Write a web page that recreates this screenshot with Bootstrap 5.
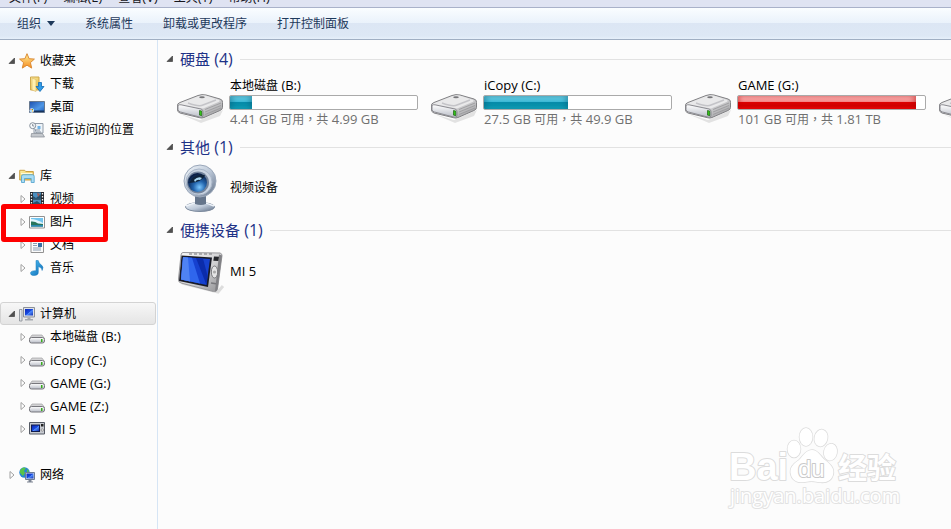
<!DOCTYPE html>
<html lang="zh-CN">
<head>
<meta charset="utf-8">
<meta name="viewport" content="width=device-width, initial-scale=1">
<title>计算机</title>
<link rel="stylesheet" href="https://cdn.jsdelivr.net/npm/bootstrap@5.3.0/dist/css/bootstrap.min.css">
<style>
body{font-family:"Open Sans","Noto Sans CJK SC",sans-serif;font-size:12px;line-height:16px;color:#000;background:#fcfcfc}
a,a:hover{color:inherit;text-decoration:none}
.latin{font-size:13px}
.menu-strip{height:7px;padding-left:9px;gap:16px;background:#dfe3f2;color:#16161c}
.menu-strip a{line-height:18px;white-space:nowrap}
.cmd-bar{height:33px;padding:0 0 0 17px;gap:30px;color:#1e395b;border-top:1px solid #a9b1c9;border-bottom:1px solid #a0afc3;background:linear-gradient(#fafdff 0,#eaf2fb 48%,#dce6f4 50%,#dde8f5 90%,#e6f0fa 100%)}
.cmd-bar button{border:0;padding:0;background:none;color:inherit}
.cmd-bar .dropdown-toggle::after{margin-left:6px;vertical-align:2px;border-top:5px solid;border-left:4px solid transparent;border-right:4px solid transparent}
.tree{width:158px;padding-top:9px;border-right:1px solid #d6e5f5}
.tree ul{margin-bottom:23px}
.tree-row{height:23px;white-space:nowrap;border:1px solid transparent;border-radius:3px}
.root-row{padding-left:7px}
.leaf-row{padding-left:18px}
.root-row .glyph{margin:0 5px 0 3px}
.leaf-row .glyph{margin:0 5px 0 2px}
.chosen{margin-right:1px;border-color:#d3d3d3;background:linear-gradient(#f7f7f7,#e5e5e5)}
.glyph{width:16px;height:16px;flex:none}
.twist{width:8px;height:8px;flex:none}
.highlight{position:absolute;left:1px;top:-6px;width:107px;height:38px;border:5px solid #fe0000;border-radius:3px;z-index:2;pointer-events:none}
.files{padding:7px 0 0 8px;min-width:0}
.group-title{height:24px;margin:0;gap:6px;font-size:15px;line-height:22px;font-weight:400;color:#1e3287;white-space:nowrap}
.group-title::after{content:"";flex:1;border-top:1px solid #e2e2e2;margin-left:1px}
.latin-lg{font-size:16px}
.drives{height:64px;padding:0 0 2px 10px}
.drive{width:254px;flex:none;gap:5px}
.big-icon{width:48px;height:48px;flex:none}
.drive-text{width:189px}
.drive-name,.free{display:block;height:16px;line-height:16px;padding-left:1px}
.capacity{height:15px;margin:2px 0 1px;border:1px solid #aaa;border-radius:2px;background:#fff}
.capacity .progress-bar{background:linear-gradient(#7adcf0 0,#3cb9d6 45%,#078ba9 50%,#0995b0 75%,#16b4ca 100%);box-shadow:inset 3px 0 5px #0a5f7a66,inset -3px 0 5px #0a5f7a66}
.capacity .full{background:linear-gradient(#ffc7c7 0,#f58b8b 42%,#dc0000 50%,#d00000 75%,#fa0808 100%);box-shadow:inset 2px 0 4px #c0000066,inset -3px 0 5px #b0000066}
.free{color:#707070}
.device{height:59px;padding:0 0 2px 11px;gap:5px}
.brand-mark{position:absolute;right:46px;bottom:14px;width:180px;height:92px;pointer-events:none}
</style>
<script src="https://cdn.jsdelivr.net/npm/bootstrap@5.3.0/dist/js/bootstrap.bundle.min.js"></script>
</head>
<body class="min-vh-100 d-flex flex-column position-relative overflow-hidden">
<svg width="0" height="0" class="position-absolute" aria-hidden="true">
<defs>
<linearGradient id="gold" x2="1" y2="1"><stop stop-color="#fff3a8"/><stop offset="1" stop-color="#e5b43c"/></linearGradient>
<linearGradient id="star" x2="0" y2="1"><stop stop-color="#fff29a"/><stop offset="1" stop-color="#f58a1f"/></linearGradient>
<linearGradient id="screen" x2="1" y2="1"><stop stop-color="#0a28b8"/><stop offset=".5" stop-color="#1a4be0"/><stop offset=".55" stop-color="#4f8cff"/><stop offset="1" stop-color="#1230b0"/></linearGradient>
<linearGradient id="desk" x2="1" y2="1"><stop stop-color="#1c4fae"/><stop offset=".6" stop-color="#4f97e6"/><stop offset="1" stop-color="#1b59b9"/></linearGradient>
<linearGradient id="metal" x2="1" y2="1"><stop stop-color="#fafafa"/><stop offset=".55" stop-color="#d0d0d2"/><stop offset="1" stop-color="#8f8f92"/></linearGradient>
<linearGradient id="steel" x2="1" y2="1"><stop stop-color="#f4f8fc"/><stop offset=".5" stop-color="#bcc8d8"/><stop offset="1" stop-color="#5d6d84"/></linearGradient>
<linearGradient id="front" x2="0" y2="1"><stop stop-color="#fff"/><stop offset="1" stop-color="#b8bcc6"/></linearGradient>
<radialGradient id="lens" cx=".6" cy=".75" r=".7"><stop stop-color="#7cc8ff"/><stop offset=".45" stop-color="#2365ad"/><stop offset="1" stop-color="#0b1f46"/></radialGradient>
<linearGradient id="note" x2="1" y2="1"><stop stop-color="#55c2f5"/><stop offset="1" stop-color="#0869b5"/></linearGradient>
</defs>
<symbol id="open" viewBox="0 0 8 8"><path d="M6.500 1v5.500H1z" fill="#505050" stroke="#303030" stroke-width=".6"/></symbol>
<symbol id="shut" viewBox="0 0 8 8"><path d="M2 .5v7l4-3.500z" fill="#fff" stroke="#a0a0a0"/></symbol>
<symbol id="i-star" viewBox="0 0 16 16"><path d="M8 .7l2.100 5 5.300.4-4 3.500 1.300 5.500L8 12.200l-4.700 2.900 1.300-5.500-4-3.500 5.300-.4z" fill="url(#star)" stroke="#dc8b35"/></symbol>
<symbol id="i-down" viewBox="0 0 16 16"><path d="M1.500 1h8.500v13H1.500z" fill="url(#gold)" stroke="#cfa84d"/><path d="M3 2l4 1.500v12L3 14z" fill="#fff0ae" stroke="#d6b566" stroke-width=".6"/><path d="M9.500 6.500h3v4h2.500L11 15.500 7 10.500h2.500z" fill="#2f9be9" stroke="#1269b2" stroke-width=".8"/></symbol>
<symbol id="i-desk" viewBox="0 0 16 16"><path d="M.5 2.500h15v11H.5z" fill="url(#desk)" stroke="#66788f"/><path d="M1 11.500h14V13H1z" fill="#17345d"/><circle cx="2.800" cy="11.500" r="2.200" fill="#e6f1ff"/><path d="M1.500 10h1v1h-1z" fill="#f35325"/><path d="M3 10h1v1H3z" fill="#6ab11a"/><path d="M1.500 11.500h1v1h-1z" fill="#0694f0"/><path d="M3 11.500h1v1H3z" fill="#ffba08"/></symbol>
<symbol id="i-recent" viewBox="0 0 16 16"><path d="M5 1.500h9v9.500H5z" fill="#eef3f8" stroke="#929ca8"/><path d="M2.500 11.500h11l2 3.500h-13.500z" fill="#c3c7cc" stroke="#858b93" stroke-width=".7"/><path d="M6 7l1.500 4M7 8h4M8 10h4" stroke="#8b95a2" fill="none"/><path d="M8.500 4h3v3h-3z" fill="#70b2e4"/><circle cx="3.700" cy="3.700" r="3" fill="#f7fafc" stroke="#87909b"/><path d="M3.700 2v2h1.500" stroke="#6b7480" fill="none" stroke-width=".8"/></symbol>
<symbol id="i-lib" viewBox="0 0 16 16"><path d="M.7 12V2.300h5l1 1.200h7.600V12z" fill="url(#gold)" stroke="#cba044"/><path d="M2 5.500h11.500" stroke="#fff9d8"/><path d="M2.500 14.500V8.300q0-1.600 1.600-1.600h9.500q1.600 0 1.600 1.600v6.200h-3v-4H5.500v4z" fill="#a9ddf5" stroke="#4d9fcb" stroke-width=".8"/></symbol>
<symbol id="i-film" viewBox="0 0 16 16"><path d="M1 1h14v14H1z" fill="#25292f"/><path d="M4 1.500h8v6H4zM4 8.500h8v6H4z" fill="#4a8fc0"/><path d="M4 5l3 2 5-4v4.500H4zM4 12l4-2 4 3v1.500H4z" fill="#27506b"/><path d="M8 2l3 1-2 3z" fill="#a9574b"/><path d="M2.500 2v13M13.500 2v13" stroke="#f3f3f3" stroke-width="1.300" stroke-dasharray="1.500 1.500"/></symbol>
<symbol id="i-pic" viewBox="0 0 16 16"><path d="M.5 2.500h15v11.500H.5z" fill="#fff" stroke="#929292"/><path d="M2 4h12v8.500H2z" fill="#72c4ef"/><path d="M2 5q5 0 12 4v1H2z" fill="#e3f5fb"/><path d="M2 7.500q4-.5 7 2l5 .5v2.500H2z" fill="#28765c"/><path d="M2 11h12v1.500H2z" fill="#2a87b2"/></symbol>
<symbol id="i-doc" viewBox="0 0 16 16"><path d="M2 .5h9l3.500 3.500v11.500H2z" fill="#fafafa" stroke="#929292"/><path d="M4 4h5M4 6.500h4M4 8.500h4M4 11h8M4 13h8" stroke="#8c9db2"/><path d="M9 6h4v4H9z" fill="#376fa4"/></symbol>
<symbol id="i-note" viewBox="0 0 16 16"><path d="M7 .5h2.200q.5 3 3.500 4.800 2.300 1.700.4 5.200.1-3-3.800-4v5.700q0 3.300-4.300 3.300-3.500 0-3.500-2.300 0-2.700 5.500-2.500z" fill="url(#note)" stroke="#1678ba" stroke-width=".5"/></symbol>
<symbol id="i-pc" viewBox="0 0 16 16"><path d="M.5 3.500h2.500V15H.5z" fill="#e2e5e8" stroke="#858b93" stroke-width=".8"/><path d="M4.500 1.500h11v9.500h-11z" fill="#dfe2e7" stroke="#8b9098"/><path d="M6 3h8v6.500H6z" fill="url(#screen)"/><path d="M8.500 11.500h3V13H14v1.500H6V13h2.500z" fill="#a4a8ae"/></symbol>
<symbol id="i-hdd" viewBox="0 0 16 16"><path d="M3 6h10l2.500 3.500H.5z" fill="#d3d3d5" stroke="#a1a1a3" stroke-width=".7"/><rect x=".5" y="8.500" width="15" height="5.500" rx="2" fill="url(#front)" stroke="#77777c"/><path d="M12 10h1.500v3H12z" fill="#37ae1b"/></symbol>
<symbol id="i-mi" viewBox="0 0 16 16"><path d="M.5 1.500h15v11.500H.5z" fill="#c8cbd1" stroke="#555a64"/><path d="M2 3.500h9v7.500H2z" fill="#101b4c"/><path d="M3 4.500h7V10H3z" fill="url(#screen)"/><path d="M12 3h2.500v2.500H12z" fill="#222"/><circle cx="13.300" cy="9" r="1.200" fill="#f4f4f4" stroke="#666" stroke-width=".6"/></symbol>
<symbol id="i-net" viewBox="0 0 16 16"><circle cx="5.500" cy="5.500" r="5.200" fill="#2584d5"/><path d="M1 3l3-2.500L7 1 5 4l1 2-2 3-3-3zM8 2l2 2-2 2z" fill="#57c44a"/><path d="M6.500 5.500h9v7h-9z" fill="#d8dde6" stroke="#6e7c95"/><path d="M7.500 6.500h7v5h-7z" fill="url(#screen)"/><path d="M9.500 13h3v1.500H14v1H8v-1h1.500z" fill="#7c8492"/></symbol>
<symbol id="b-hdd" viewBox="0 0 48 48"><path d="M4 36l20 6 23-10-3 6-19 7z" fill="#000" opacity=".1"/><path d="M1.500 28Q1 25.500 4 24.500L22 17.500Q26 16 30 17L44 21Q47 22 46.500 24.500V29.500Q46.500 31.500 44 32.500L28 39.500Q26 40.500 23.500 39.700L4 35Q1.500 34 1.500 32z" fill="url(#metal)" stroke="#808083"/><path d="M4 26L24 18q3-1 6-.2L43 22q1.500.8 0 1.800L27 30.500z" fill="#e9e9ea"/><path d="M12 25q11 4 15 2l13-5" fill="none" stroke="#c4c4c8" stroke-width="1.500"/><path d="M2 27.500q1-1 3-.7l20 4.200q2 .5 2 2.500v4q0 2.300-2.500 1.800L4.500 34Q2 33.500 2 31.500z" fill="url(#front)" stroke="#8c8c92"/><path d="M23.500 32.500l2.300.6v4.600l-2.300-.6z" fill="#32c516" stroke="#1d5f14" stroke-width=".7"/><path d="M29 31.500l16-6.500M29 34l16-6.500M29 36.500l16-6.500" stroke="#98989b" stroke-width=".8"/><ellipse cx="26" cy="19.300" rx="2.800" ry="1" fill="#77777a"/></symbol>
<symbol id="b-cam" viewBox="0 0 48 48"><ellipse cx="23" cy="43" rx="14.500" ry="4.500" fill="url(#steel)" stroke="#7c8a9d"/><path d="M9 42q14-7 28 0" fill="none" stroke="#eef3f9" stroke-width="1.500"/><path d="M18 32h11v8q-5 2-11 0z" fill="#65758b"/><circle cx="23" cy="17" r="16" fill="url(#steel)" stroke="#9aa7b9"/><circle cx="22" cy="18" r="13" fill="#cbd5e2" stroke="#a9b6c8"/><circle cx="21" cy="18.500" r="11" fill="#72839b"/><circle cx="20.500" cy="18.500" r="9.500" fill="url(#lens)"/><path d="M12 19q4-10 16-8-2 7-16 8z" fill="#10243c"/><path d="M17 16q4-4 8-2l-2 2q-3-1-5 2z" fill="#a9d6ef"/></symbol>
<symbol id="b-mi" viewBox="0 0 48 48"><path d="M5 36l36 9 5-6" fill="none" stroke="#000" stroke-width="3" opacity=".12"/><path d="M6 5.500L43 6q2 .5 2 2.500L40.500 42q-.5 3-4 2.500L4 36q-3-.7-2.500-4L4 8q.3-2.500 2-2.500z" fill="url(#metal)" stroke="#98989b"/><path d="M45 8.500L40.500 42q-.5 2-2.500 2.500l4-37z" fill="#808084"/><path d="M4.500 8.500l30.500 2L31 40 2 34z" fill="#191b26"/><path d="M6 10l27 2-3.500 26L4 32.500z" fill="#1641cf"/><path d="M6 10l9 .7 8 25.800-19-4z" fill="#2f66ed"/><path d="M6 10l5 .4 2 24-9-1.900z" fill="#4f83f3"/><path d="M19 11l7 .5 4.500 17L29.500 38z" fill="#0b2cab"/><path d="M37 9.500l5 .2-.7 4.300-5-.3z" fill="#25262a"/><ellipse cx="37.500" cy="25" rx="3.200" ry="6" fill="#e5e5e6" stroke="#77777b"/><circle cx="37.500" cy="25" r="1.600" fill="#aaa"/><path d="M34 36l5 .8" stroke="#77777b" stroke-width="1.500"/><path d="M12 7h25" stroke="#77777b" stroke-dasharray="3 2"/></symbol>
</svg>

<nav class="menu-strip d-flex align-items-end overflow-hidden" aria-label="菜单栏">
<a href="#">文件<span class="latin">(F)</span></a><a href="#">编辑<span class="latin">(E)</span></a><a href="#">查看<span class="latin">(V)</span></a><a href="#">工具<span class="latin">(T)</span></a><a href="#">帮助<span class="latin">(H)</span></a>
</nav>
<div class="cmd-bar d-flex align-items-center">
<button type="button" class="dropdown-toggle">组织</button><button type="button">系统属性</button><button type="button">卸载或更改程序</button><button type="button">打开控制面板</button>
</div>

<div class="d-flex flex-grow-1">
<nav class="tree flex-shrink-0" aria-label="导航窗格">
<ul class="list-unstyled">
<li><a href="#" class="tree-row root-row d-flex align-items-center"><svg class="twist"><use href="#open"/></svg><svg class="glyph"><use href="#i-star"/></svg>收藏夹</a></li>
<li><a href="#" class="tree-row leaf-row d-flex align-items-center"><span class="twist"></span><svg class="glyph"><use href="#i-down"/></svg>下载</a></li>
<li><a href="#" class="tree-row leaf-row d-flex align-items-center"><span class="twist"></span><svg class="glyph"><use href="#i-desk"/></svg>桌面</a></li>
<li><a href="#" class="tree-row leaf-row d-flex align-items-center"><span class="twist"></span><svg class="glyph"><use href="#i-recent"/></svg>最近访问的位置</a></li>
</ul>
<ul class="list-unstyled">
<li><a href="#" class="tree-row root-row d-flex align-items-center"><svg class="twist"><use href="#open"/></svg><svg class="glyph"><use href="#i-lib"/></svg>库</a></li>
<li><a href="#" class="tree-row leaf-row d-flex align-items-center"><svg class="twist"><use href="#shut"/></svg><svg class="glyph"><use href="#i-film"/></svg>视频</a></li>
<li class="position-relative"><a href="#" class="tree-row leaf-row d-flex align-items-center"><svg class="twist"><use href="#shut"/></svg><svg class="glyph"><use href="#i-pic"/></svg>图片</a><span class="highlight"></span></li>
<li><a href="#" class="tree-row leaf-row d-flex align-items-center"><svg class="twist"><use href="#shut"/></svg><svg class="glyph"><use href="#i-doc"/></svg>文档</a></li>
<li><a href="#" class="tree-row leaf-row d-flex align-items-center"><svg class="twist"><use href="#shut"/></svg><svg class="glyph"><use href="#i-note"/></svg>音乐</a></li>
</ul>
<ul class="list-unstyled">
<li><a href="#" class="tree-row root-row chosen d-flex align-items-center" aria-current="page"><svg class="twist"><use href="#open"/></svg><svg class="glyph"><use href="#i-pc"/></svg>计算机</a></li>
<li><a href="#" class="tree-row leaf-row d-flex align-items-center"><svg class="twist"><use href="#shut"/></svg><svg class="glyph"><use href="#i-hdd"/></svg><span>本地磁盘<span class="latin"> (B:)</span></span></a></li>
<li><a href="#" class="tree-row leaf-row d-flex align-items-center"><svg class="twist"><use href="#shut"/></svg><svg class="glyph"><use href="#i-hdd"/></svg><span class="latin">iCopy (C:)</span></a></li>
<li><a href="#" class="tree-row leaf-row d-flex align-items-center"><svg class="twist"><use href="#shut"/></svg><svg class="glyph"><use href="#i-hdd"/></svg><span class="latin">GAME (G:)</span></a></li>
<li><a href="#" class="tree-row leaf-row d-flex align-items-center"><svg class="twist"><use href="#shut"/></svg><svg class="glyph"><use href="#i-hdd"/></svg><span class="latin">GAME (Z:)</span></a></li>
<li><a href="#" class="tree-row leaf-row d-flex align-items-center"><svg class="twist"><use href="#shut"/></svg><svg class="glyph"><use href="#i-mi"/></svg><span class="latin">MI 5</span></a></li>
</ul>
<ul class="list-unstyled">
<li><a href="#" class="tree-row root-row d-flex align-items-center"><svg class="twist"><use href="#shut"/></svg><svg class="glyph"><use href="#i-net"/></svg>网络</a></li>
</ul>
</nav>

<main class="files flex-grow-1">
<section>
<h2 class="group-title d-flex align-items-center"><svg class="twist"><use href="#open"/></svg><span>硬盘<span class="latin-lg"> (4)</span></span></h2>
<div class="drives d-flex align-items-center overflow-hidden">
<a href="#" class="drive d-flex align-items-center"><svg class="big-icon"><use href="#b-hdd"/></svg><span class="drive-text"><span class="drive-name">本地磁盘<span class="latin"> (B:)</span></span><span class="progress capacity"><span class="progress-bar" style="width:12%"></span></span><span class="free"><span class="latin">4.41 GB </span>可用<span lang="zh-TW">，</span>共<span class="latin"> 4.99 GB</span></span></span></a>
<a href="#" class="drive d-flex align-items-center"><svg class="big-icon"><use href="#b-hdd"/></svg><span class="drive-text"><span class="drive-name latin">iCopy (C:)</span><span class="progress capacity"><span class="progress-bar" style="width:45%"></span></span><span class="free"><span class="latin">27.5 GB </span>可用<span lang="zh-TW">，</span>共<span class="latin"> 49.9 GB</span></span></span></a>
<a href="#" class="drive d-flex align-items-center"><svg class="big-icon"><use href="#b-hdd"/></svg><span class="drive-text"><span class="drive-name latin">GAME (G:)</span><span class="progress capacity"><span class="progress-bar full" style="width:95%"></span></span><span class="free"><span class="latin">101 GB </span>可用<span lang="zh-TW">，</span>共<span class="latin"> 1.81 TB</span></span></span></a>
<a href="#" class="drive d-flex align-items-center" aria-label="GAME (Z:)"><svg class="big-icon"><use href="#b-hdd"/></svg></a>
</div>
</section>
<section>
<h2 class="group-title d-flex align-items-center"><svg class="twist"><use href="#open"/></svg><span>其他<span class="latin-lg"> (1)</span></span></h2>
<a href="#" class="device d-flex align-items-center"><svg class="big-icon"><use href="#b-cam"/></svg>视频设备</a>
</section>
<section>
<h2 class="group-title d-flex align-items-center"><svg class="twist"><use href="#open"/></svg><span>便携设备<span class="latin-lg"> (1)</span></span></h2>
<a href="#" class="device d-flex align-items-center"><svg class="big-icon"><use href="#b-mi"/></svg><span class="latin">MI 5</span></a>
</section>
</main>
</div>

<svg class="brand-mark" viewBox="0 0 180 92" role="img" aria-label="Baidu 经验">
<g fill="#fff" stroke="#dcdcdc" stroke-width="2" paint-order="stroke" stroke-linejoin="round">
<text x="4" y="57" font-family="Liberation Sans, sans-serif" font-weight="700" font-size="38">Bai</text>
<g stroke-width="1.500"><ellipse cx="69" cy="26" rx="6.500" ry="8.500"/><ellipse cx="81" cy="14" rx="6.500" ry="9"/><ellipse cx="96" cy="15" rx="6.500" ry="8.500" transform="rotate(12 96 15)"/><ellipse cx="105.500" cy="29" rx="6.500" ry="8.500" transform="rotate(12 105 29)"/>
<path d="M87 27c-6 0-9 6-13 10-6 4-10 8-8 15 2 7 9 8 14 7 5-1 8-1 13 0 6 1 13 0 15-7 2-7-3-11-8-15-5-4-7-10-13-10z"/></g>
<text x="73" y="54" font-family="Liberation Sans, sans-serif" font-size="24" stroke="#c9c9c9">du</text>
<text x="113" y="56" font-family="Noto Sans CJK SC, sans-serif" font-weight="700" font-size="29">经验</text>
<text x="5" y="80" font-family="Open Sans, sans-serif" font-size="20" stroke="#e2e2e2">jingyan.baidu.com</text>
</g>
</svg>
</body>
</html>
